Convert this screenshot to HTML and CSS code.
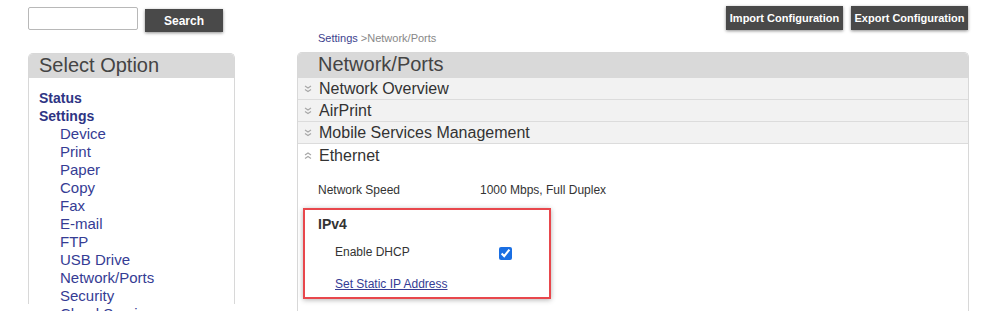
FILE: index.html
```html
<!DOCTYPE html>
<html lang="en">
<head>
  <meta charset="UTF-8" />
  <title>Network/Ports</title>
  <link rel="stylesheet" href="styles.css">
</head>
<body>
  <div class="page">
    <aside class="sidebar">
      <form class="search">
        <input type="text" class="search-box" />
        <button type="button" class="btn search-btn">Search</button>
      </form>

      <div class="panel side-panel">
        <div class="panel-head">Select Option</div>
        <ul class="menu">
          <li class="top"><a href="#">Status</a></li>
          <li class="top"><a href="#">Settings</a></li>
          <li class="sub"><a href="#">Device</a></li>
          <li class="sub"><a href="#">Print</a></li>
          <li class="sub"><a href="#">Paper</a></li>
          <li class="sub"><a href="#">Copy</a></li>
          <li class="sub"><a href="#">Fax</a></li>
          <li class="sub"><a href="#">E-mail</a></li>
          <li class="sub"><a href="#">FTP</a></li>
          <li class="sub"><a href="#">USB Drive</a></li>
          <li class="sub"><a href="#">Network/Ports</a></li>
          <li class="sub"><a href="#">Security</a></li>
          <li class="sub"><a href="#">Cloud Services</a></li>
        </ul>
      </div>
    </aside>

    <main class="main">
      <div class="toolbar">
        <button type="button" class="btn tool-btn">Import Configuration</button>
        <button type="button" class="btn tool-btn">Export Configuration</button>
      </div>
      <div class="crumbs"><a href="#">Settings</a> &gt;Network/Ports</div>

      <div class="panel main-panel">
        <div class="panel-head">Network/Ports</div>

        <div class="section closed">
          <svg class="chev" viewBox="0 0 8 8"><polyline points="1,1 4,3 7,1" /><polyline points="1,4.5 4,6.5 7,4.5" /></svg>
          Network Overview
        </div>
        <div class="section closed">
          <svg class="chev" viewBox="0 0 8 8"><polyline points="1,1 4,3 7,1" /><polyline points="1,4.5 4,6.5 7,4.5" /></svg>
          AirPrint
        </div>
        <div class="section closed">
          <svg class="chev" viewBox="0 0 8 8"><polyline points="1,1 4,3 7,1" /><polyline points="1,4.5 4,6.5 7,4.5" /></svg>
          Mobile Services Management
        </div>
        <div class="section open">
          <svg class="chev" viewBox="0 0 8 8"><polyline points="1,3 4,1 7,3" /><polyline points="1,6.5 4,4.5 7,6.5" /></svg>
          Ethernet
        </div>

        <div class="section-body">
          <div class="field">
            <span class="label">Network Speed</span>
            <span class="value">1000 Mbps, Full Duplex</span>
          </div>

          <div class="group">
            <h3>IPv4</h3>
            <div class="field inner">
              <span class="label">Enable DHCP</span>
              <input type="checkbox" class="check" checked />
            </div>
            <a href="#" class="link">Set Static IP Address</a>
          </div>
        </div>
      </div>
    </main>
  </div>
</body>
</html>
```

FILE: styles.css
```css
body {
  margin: 0;
  font-family: 'Liberation Sans', Arial, sans-serif;
  color: #333;
  background: #fff;
  overflow: hidden;
}

.page {
  display: flex;
  padding-left: 28px;
  height: 311px;
}

.sidebar {
  width: 207px;
  padding-top: 7px;
  flex-shrink: 0;
}

.search {
  display: flex;
  align-items: flex-start;
  margin: 0;
}

.search-box {
  width: 110px;
  height: 23px;
  box-sizing: border-box;
  border: 1px solid #b8b8b8;
  border-radius: 2px;
  margin: 0;
}

.btn {
  background: #494949;
  color: #fff;
  font-family: 'Liberation Sans', Arial, sans-serif;
  font-weight: bold;
  font-size: 12px;
  border: none;
  box-shadow: 0 1px 3px rgba(0,0,0,0.45);
  height: 24px;
  padding: 0 5px;
  cursor: pointer;
}

.search-btn {
  width: 78px;
  height: 23px;
  margin-left: 7px;
  margin-top: 2px;
}

.tool-btn {
  font-size: 11px;
  width: 117px;
  padding: 0;
}

.panel {
  border: 1px solid #d8d8d8;
  border-bottom: none;
  border-radius: 5px 5px 0 0;
}

.panel-head {
  background: #d9d9d9;
  color: #444;
  font-size: 20px;
  height: 24px;
  line-height: 22px;
  border-radius: 4px 4px 0 0;
}

.side-panel {
  margin-top: 21px;
  height: 250px;
}

.side-panel .panel-head {
  padding-left: 10px;
}

.menu {
  list-style: none;
  margin: 0;
  padding: 11px 0 0 10px;
}

.menu li {
  font-size: 14px;
  line-height: 18px;
}

.menu a {
  color: #353c94;
  text-decoration: none;
}

.menu .top a {
  font-weight: bold;
  color: #2e3484;
}

.menu .sub {
  padding-left: 21px;
  font-size: 15px;
}

.main {
  margin-left: 62px;
  width: 672px;
  flex-shrink: 0;
}

.toolbar {
  display: flex;
  justify-content: flex-end;
  gap: 8px;
  padding-top: 6px;
  margin-right: 1px;
}

.crumbs {
  font-size: 11px;
  color: #888;
  padding-left: 21px;
  margin-top: 1px;
  height: 14px;
  line-height: 14px;
}

.crumbs a {
  color: #3c3f8e;
  text-decoration: none;
}

.main-panel {
  margin-top: 7px;
  height: 264px;
}

.main-panel .panel-head {
  padding-left: 20px;
  height: 25px;
  line-height: 23px;
}

.section {
  display: flex;
  align-items: center;
  height: 21px;
  border-bottom: 1px solid #dcdcdc;
  background: #f2f2f2;
  font-size: 16px;
  color: #333;
  padding-left: 6px;
}

.section.open {
  background: #fff;
  border-bottom: none;
  height: 23px;
}

.chev {
  width: 8px;
  height: 8px;
  margin-right: 7px;
  fill: none;
  stroke: #a8a8a8;
  stroke-width: 1.2;
}

.section-body {
  padding: 16px 0 0 5px;
}

.field {
  display: flex;
  align-items: center;
  font-size: 12px;
  height: 14px;
  padding-left: 15px;
}

.label {
  width: 162px;
}

.group {
  margin-top: 11px;
  width: 244px;
  height: 87px;
  border: 2px solid #e8474c;
  box-shadow: 0 1px 5px rgba(0,0,0,0.3);
}

.group h3 {
  margin: 6px 0 0 13px;
  font-size: 14px;
  line-height: 16px;
}

.field.inner {
  padding-left: 30px;
  margin-top: 13px;
}

.field.inner .label {
  width: 164px;
}

.check {
  width: 13px;
  height: 13px;
  margin: 3px 0 0 0;
  accent-color: #1a6fe3;
}

.link {
  display: block;
  margin: 18px 0 0 30px;
  font-size: 12px;
  color: #353c94;
}
```
